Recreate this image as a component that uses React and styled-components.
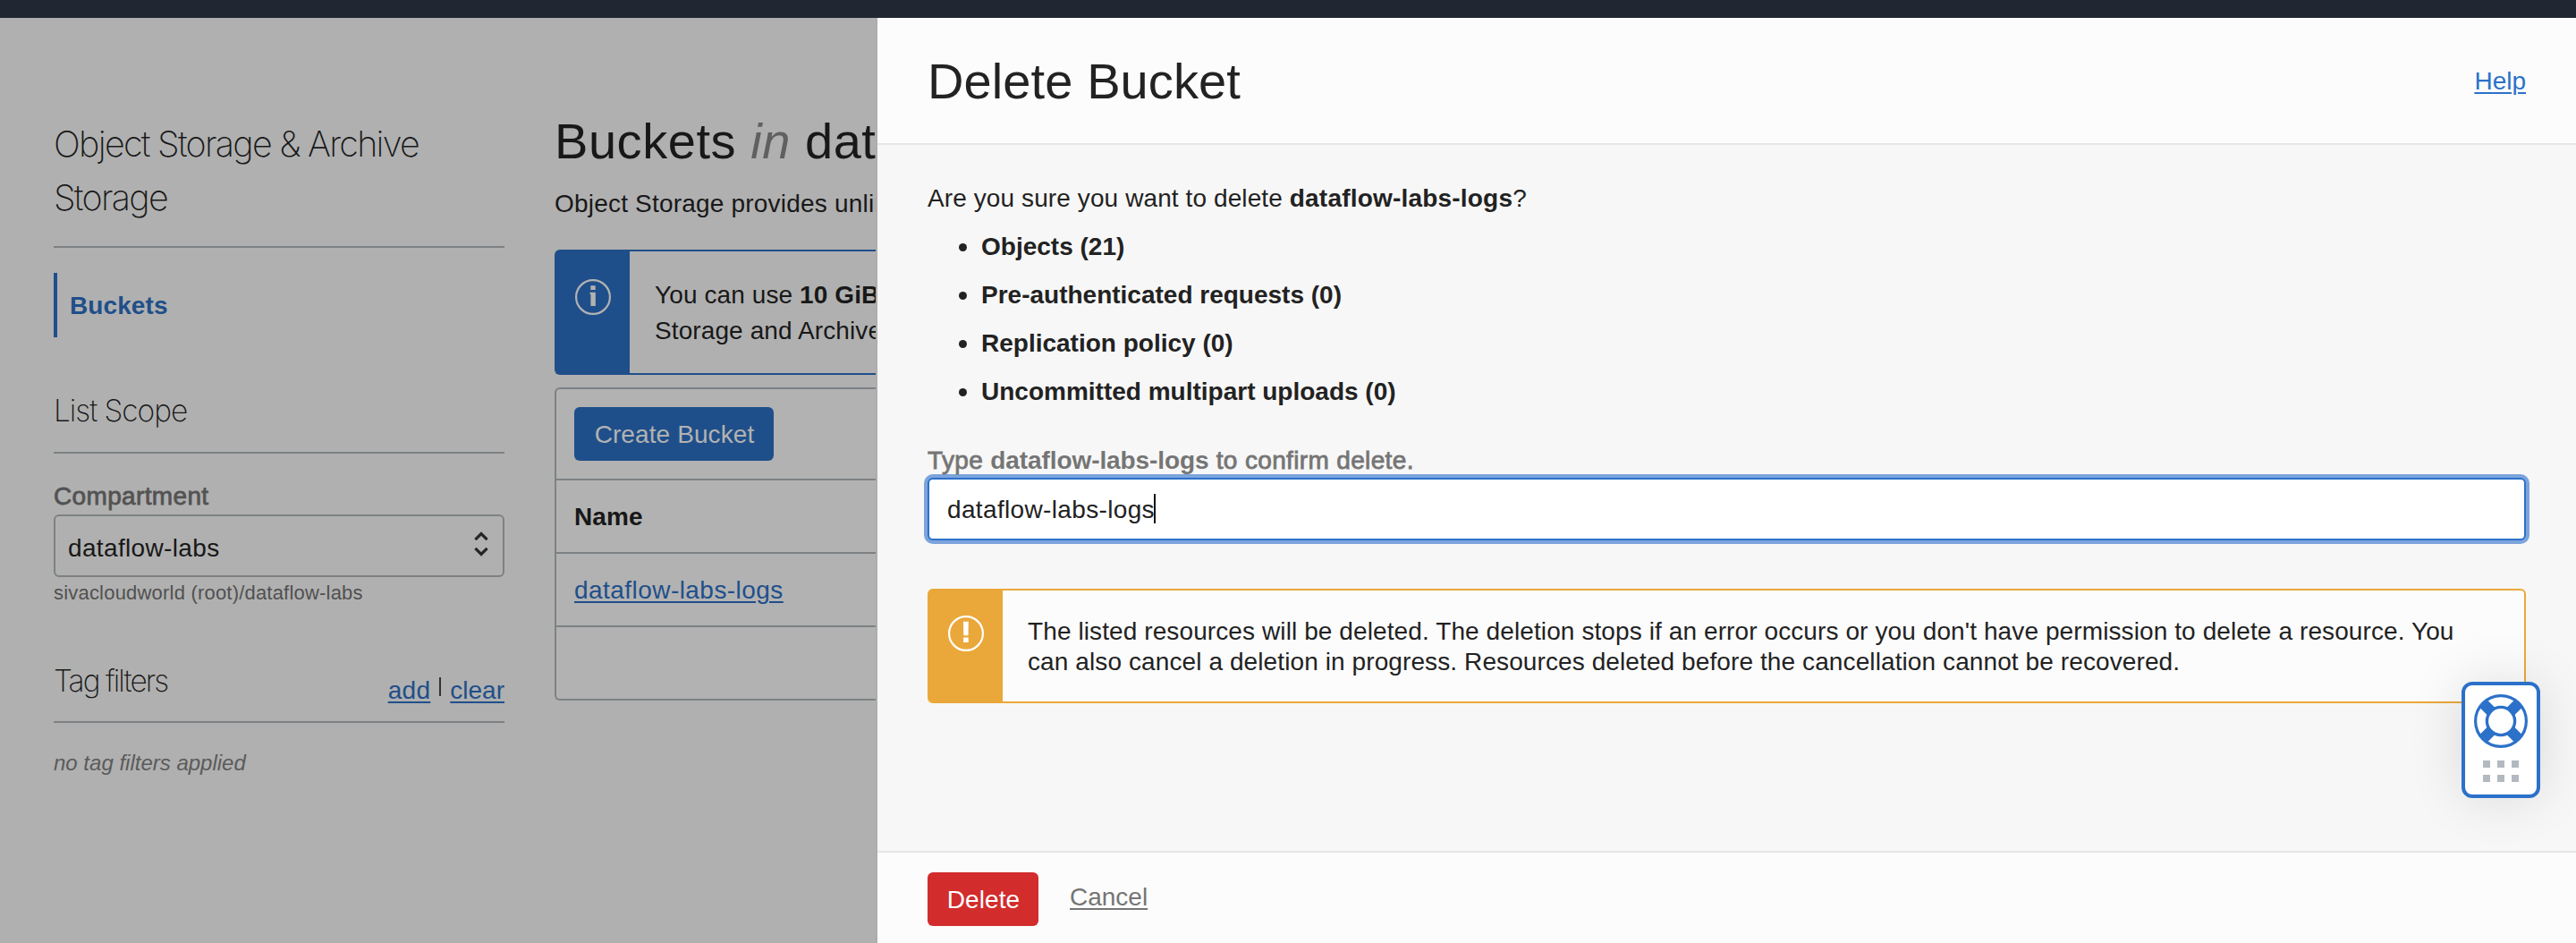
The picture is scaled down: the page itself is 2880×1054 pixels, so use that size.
import React from 'react';
import styled, { createGlobalStyle } from 'styled-components';

const Global = createGlobalStyle`
  * { box-sizing: border-box; }
  body {
    margin: 0;
    background: #b0b0b0;
    color: #222;
    font: 28px/32px "Liberation Sans", Arial, sans-serif;
    letter-spacing: 0.1px;
  }
`;

const Page = styled.div`
  display: flex;
  flex-direction: column;
  width: 2880px;
  height: 1054px;
  overflow: hidden;
`;

const TopBar = styled.div`
  flex: none;
  height: 20px;
  background: #202733;
`;

const Content = styled.div`
  flex: 1;
  display: flex;
  min-height: 0;
`;

const Backdrop = styled.div`
  display: flex;
  gap: 56px;
  width: 981px;
  flex: none;
  padding-left: 60px;
  border-right: 2px solid #adadad;
  background: #b0b0b0;
  color: #181818;
  overflow: hidden;
`;

const Sidebar = styled.aside`
  width: 504px;
  flex: none;
  padding-top: 111px;
`;

const thin = `
  font-family: Inter, "Liberation Sans", sans-serif;
  font-weight: 200;
`;

const ServiceTitle = styled.h1`
  ${thin}
  margin: 0;
  padding-bottom: 24px;
  border-bottom: 2px solid #7d8184;
  font-size: 39.5px;
  line-height: 60px;
  letter-spacing: -1.72px;
`;

const NavItem = styled.a`
  display: flex;
  align-items: center;
  height: 72px;
  margin-top: 28px;
  padding: 2px 0 0 14px;
  border-left: 4px solid #1f4f8a;
  color: #1f4f8a;
  font-weight: 700;
`;

const SectionHead = styled.div`
  display: flex;
  justify-content: space-between;
  height: ${(p) => p.$height}px;
  margin-top: ${(p) => p.$gap}px;
  border-bottom: 2px solid #7d8184;
`;

const SectionTitle = styled.h2`
  ${thin}
  margin: 0;
  font-size: 33.5px;
  line-height: 40px;
  letter-spacing: ${(p) => p.$spacing}px;
`;

const FilterActions = styled.div`
  display: flex;
  padding-top: 15px;
`;

const Separator = styled.span`
  width: 2px;
  height: 21px;
  margin: 1px 10px 0;
  background: #333;
`;

const Link = styled.a`
  color: ${(p) => p.$color || '#1f4f8a'};
  text-decoration: underline;
  text-decoration-thickness: 2px;
  text-underline-offset: 3px;
  letter-spacing: ${(p) => p.$spacing || 0}px;
`;

const FieldLabel = styled.div`
  color: ${(p) => p.$color};
  letter-spacing: 0.35px;
  -webkit-text-stroke: 0.8px ${(p) => p.$color};
  margin-top: ${(p) => p.$gap}px;

  b {
    letter-spacing: -0.08px;
    -webkit-text-stroke: 0;
  }
`;

const Select = styled.div`
  display: flex;
  align-items: center;
  justify-content: space-between;
  height: 70px;
  margin-top: 4px;
  padding: 6px 14px 0 14px;
  border: 2px solid #7d8184;
  border-radius: 6px;
  letter-spacing: 0.35px;
  font-variant-ligatures: none;

  svg { margin-top: -10px; }
`;

const Hint = styled.div`
  margin-top: 5px;
  color: #515151;
  font-size: 22px;
  line-height: 26px;
  letter-spacing: 0.2px;
  font-variant-ligatures: none;
`;

const Empty = styled.div`
  margin-top: 30px;
  color: #5b5b5b;
  font-size: 24px;
  font-style: italic;
  line-height: 30px;
  letter-spacing: 0;
`;

const Main = styled.main`
  flex: 1;
  min-width: 0;
  padding-top: 104px;
  overflow: hidden;
  white-space: nowrap;
`;

const MainTitle = styled.h1`
  margin: 0;
  font-size: 56px;
  font-weight: 400;
  line-height: 68px;
  letter-spacing: 0.55px;

  em { color: #606060; }
`;

const Intro = styled.p`
  margin: 16px 0 0;
  line-height: 40px;
  letter-spacing: 0.2px;
`;

const Notice = styled.div`
  display: flex;
  height: ${(p) => p.$height}px;
  margin-top: ${(p) => p.$gap}px;
  border: 2px solid ${(p) => p.$tone};
  border-right-width: ${(p) => (p.$open ? 0 : 2)}px;
  border-radius: ${(p) => (p.$open ? '6px 0 0 6px' : '6px')};
  background: ${(p) => p.$bg};
`;

const NoticeIcon = styled.div`
  flex: none;
  width: 82px;
  padding: ${(p) => p.$top}px 0 0 21px;
  background: ${(p) => p.$tone};

  svg { display: block; }
`;

const NoticeText = styled.div`
  padding: 29px 28px 0;
  line-height: ${(p) => p.$line}px;
`;

const Table = styled.div`
  margin-top: 14px;
  border: 2px solid #7d8184;
  border-right: 0;
  border-radius: 6px 0 0 6px;
  background: #b2b2b2;
`;

const Toolbar = styled.div`
  height: 102px;
  padding: 20px;
  border-bottom: 2px solid #7d8184;
`;

const Row = styled.div`
  display: flex;
  align-items: center;
  height: ${(p) => (p.$last ? 80 : 82)}px;
  padding: 2px 0 0 20px;
  border-bottom: ${(p) => (p.$last ? 0 : 2)}px solid #7d8184;
  font-weight: ${(p) => (p.$head ? 700 : 400)};
  font-variant-ligatures: none;
`;

const Button = styled.button`
  display: flex;
  align-items: center;
  justify-content: center;
  width: ${(p) => p.$width}px;
  height: 60px;
  padding: 2px 0 0 1px;
  border: 0;
  border-radius: 6px;
  background: ${(p) => p.$bg};
  color: ${(p) => p.$color};
  font: inherit;
  letter-spacing: 0.1px;
`;

const Drawer = styled.section`
  flex: 1;
  display: flex;
  flex-direction: column;
  background: #f7f7f7;
`;

const DrawerHeader = styled.header`
  display: flex;
  align-items: center;
  justify-content: space-between;
  height: 142px;
  padding: 2px 56px 0;
  border-bottom: 2px solid #e6e6e6;
  background: #fcfcfc;
`;

const DrawerTitle = styled.h1`
  margin: 0;
  font-size: 56px;
  font-weight: 400;
  line-height: 68px;
  letter-spacing: 0.1px;
`;

const DrawerBody = styled.div`
  flex: 1;
  padding: 38px 56px 0;
`;

const Question = styled.p`
  margin: 0;
  line-height: 44px;

  b { letter-spacing: 0.2px; }
`;

const List = styled.ul`
  margin: 5px 0 0;
  padding: 0 0 0 35px;
  list-style: none;
`;

const Item = styled.li`
  display: flex;
  align-items: center;
  gap: 16px;
  height: 54px;
  font-weight: 700;
  letter-spacing: 0;

  &::before {
    content: '';
    width: 9px;
    height: 9px;
    border-radius: 50%;
    background: #222;
  }
`;

const Input = styled.div`
  display: flex;
  align-items: center;
  height: 70px;
  margin-top: 3px;
  padding: 2px 0 0 20px;
  border: 2px solid #2c71c9;
  border-radius: 6px;
  background: #fff;
  box-shadow: 0 0 0 4px #7ca4dc;
  letter-spacing: 0.35px;
  font-variant-ligatures: none;
`;

const Caret = styled.span`
  width: 2px;
  height: 33px;
  margin: -3px 0 0 -1px;
  background: #111;
`;

const DrawerFooter = styled.footer`
  display: flex;
  gap: 35px;
  height: 103px;
  padding: 22px 56px 0;
  border-top: 2px solid #e6e6e6;
  background: #fcfcfc;
`;

const CancelWrap = styled.div`
  padding-top: 12px;
`;

const HelpWidget = styled.div`
  position: absolute;
  left: 2752px;
  top: 762px;
  display: flex;
  flex-direction: column;
  align-items: center;
  gap: 14px;
  width: 88px;
  height: 130px;
  padding-top: 10px;
  border: 4px solid #2c71c9;
  border-radius: 12px;
  background: #fff;
  box-shadow: 0 0 60px rgba(0, 0, 0, 0.12);
`;

const Dots = styled.div`
  display: grid;
  grid-template-columns: repeat(3, 8px);
  grid-auto-rows: 8px;
  gap: 8px;
`;

const Dot = styled.span`
  background: #b3b9c0;
`;

const InfoIcon = () => (
  <svg width="40" height="40" viewBox="0 0 40 40" fill="#b2b2b2">
    <circle cx="20" cy="20" r="18.9" fill="none" stroke="#b2b2b2" strokeWidth="2.2" />
    <path d="M17.3 7.3h5.4V12h-5.4zM16.6 14.8h6.2V30h-5.4V17h-.8z" />
  </svg>
);

const WarnIcon = () => (
  <svg width="40" height="40" viewBox="0 0 40 40" fill="#fff">
    <circle cx="20" cy="20" r="18.9" fill="none" stroke="#fff" strokeWidth="2.2" />
    <path d="M17 6.8h5.8l-.3 15.4h-5.2zM17.1 24.4h5.6V30h-5.6z" />
  </svg>
);

const Chevrons = () => (
  <svg width="20" height="32" viewBox="0 0 20 32" fill="none" stroke="#262626" strokeWidth="3.2">
    <path d="M3.4 11.2 10 4.6l6.6 6.6M3.4 20.8l6.6 6.6 6.6-6.6" />
  </svg>
);

const LifeRing = () => (
  <svg width="60" height="60" viewBox="0 0 60 60" fill="none" stroke="#2c71c9">
    <circle cx="30" cy="30" r="28.4" strokeWidth="3.2" />
    <path d="M10.7 10.7 19 19M49.3 10.7 41 19M10.7 49.3 19 41M49.3 49.3 41 41" strokeWidth="12" />
    <circle cx="30" cy="30" r="15.6" strokeWidth="3.4" fill="#fff" />
  </svg>
);

export default function App() {
  return (
    <Page>
      <Global />
      <TopBar />
      <Content>
        <Backdrop>
          <Sidebar>
            <ServiceTitle>Object Storage &amp; Archive Storage</ServiceTitle>
            <NavItem>Buckets</NavItem>
            <SectionHead $gap={62} $height={68}>
              <SectionTitle $spacing={-1.05}>List Scope</SectionTitle>
            </SectionHead>
            <FieldLabel $color="#535353" $gap={32}>Compartment</FieldLabel>
            <Select>
              dataflow-labs
              <Chevrons />
            </Select>
            <Hint>sivacloudworld (root)/dataflow-labs</Hint>
            <SectionHead $gap={65} $height={67}>
              <SectionTitle $spacing={-1.95}>Tag filters</SectionTitle>
              <FilterActions>
                <Link $spacing={0.3}>add</Link>
                <Separator />
                <Link>clear</Link>
              </FilterActions>
            </SectionHead>
            <Empty>no tag filters applied</Empty>
          </Sidebar>
          <Main>
            <MainTitle>Buckets <em>in</em> dat</MainTitle>
            <Intro>Object Storage provides unlim</Intro>
            <Notice $open $height={140} $gap={31} $tone="#1f4f8a" $bg="#b0b0b0">
              <NoticeIcon $top={31} $tone="#1f4f8a"><InfoIcon /></NoticeIcon>
              <NoticeText $line={40}>
                You can use <b>10 GiB</b>
                <br />
                Storage and Archive
              </NoticeText>
            </Notice>
            <Table>
              <Toolbar>
                <Button $width={223} $bg="#1f4f8a" $color="#b2b2b2">Create Bucket</Button>
              </Toolbar>
              <Row $head>Name</Row>
              <Row><Link $spacing={0.45}>dataflow-labs-logs</Link></Row>
              <Row $last />
            </Table>
          </Main>
        </Backdrop>
        <Drawer>
          <DrawerHeader>
            <DrawerTitle>Delete Bucket</DrawerTitle>
            <Link $color="#2c71c9">Help</Link>
          </DrawerHeader>
          <DrawerBody>
            <Question>Are you sure you want to delete <b>dataflow-labs-logs</b>?</Question>
            <List>
              <Item>Objects (21)</Item>
              <Item>Pre-authenticated requests (0)</Item>
              <Item>Replication policy (0)</Item>
              <Item>Uncommitted multipart uploads (0)</Item>
            </List>
            <FieldLabel $color="#757575" $gap={34}>
              Type <b>dataflow-labs-logs</b> to confirm delete.
            </FieldLabel>
            <Input>
              dataflow-labs-logs
              <Caret />
            </Input>
            <Notice $height={128} $gap={54} $tone="#eaa83a" $bg="#fcfcfc">
              <NoticeIcon $top={28} $tone="#eaa83a"><WarnIcon /></NoticeIcon>
              <NoticeText $line={34}>
                The listed resources will be deleted. The deletion stops if an error occurs or you
                don't have permission to delete a resource. You can also cancel a deletion in
                progress. Resources deleted before the cancellation cannot be recovered.
              </NoticeText>
            </Notice>
          </DrawerBody>
          <DrawerFooter>
            <Button $width={124} $bg="#d22c2d" $color="#fff">Delete</Button>
            <CancelWrap><Link $color="#757575">Cancel</Link></CancelWrap>
          </DrawerFooter>
        </Drawer>
      </Content>
      <HelpWidget>
        <LifeRing />
        <Dots>
          <Dot /><Dot /><Dot /><Dot /><Dot /><Dot />
        </Dots>
      </HelpWidget>
    </Page>
  );
}
